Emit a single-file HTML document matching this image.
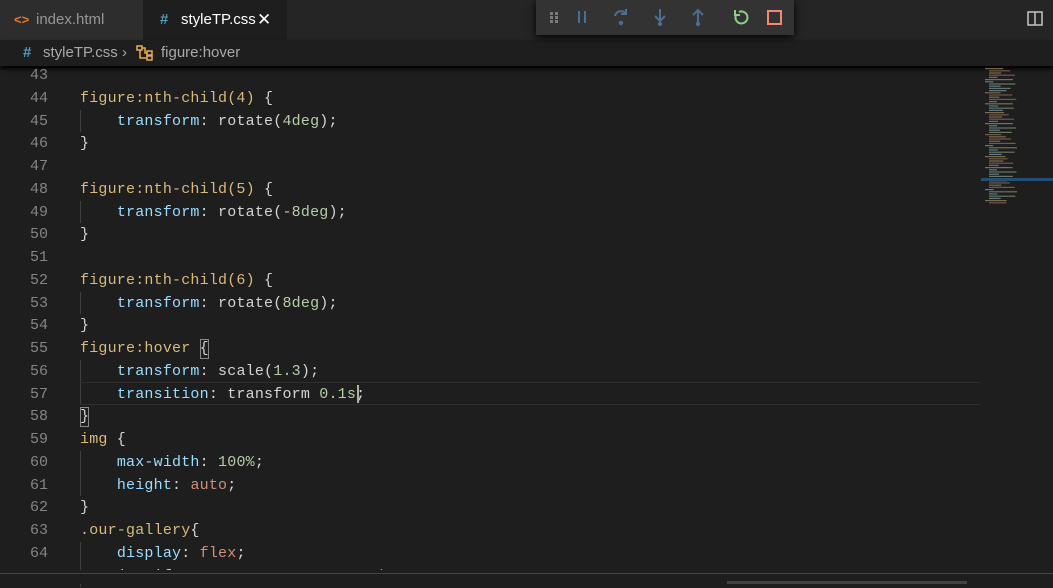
<!DOCTYPE html>
<html><head><meta charset="utf-8"><style>
*{margin:0;padding:0;box-sizing:border-box}
body{width:1053px;height:584px;background:#1e1e1e;overflow:hidden;position:relative;font-family:"Liberation Sans",sans-serif}
.tabs{position:absolute;left:0;top:0;width:1053px;height:40px;background:#252526}
.tab{position:absolute;top:0;height:40px;font-size:15px;line-height:40px}
.t1{left:0;width:143px;background:#2d2d2d;color:#969696}
.t2{left:143px;width:144px;background:#1e1e1e;color:#fff}
.bc{position:absolute;left:0;top:40px;width:1053px;height:26px;background:#1e1e1e;color:#a9a9a9;font-size:15px;line-height:26px;box-shadow:0 3px 4px #000}
.code{position:absolute;left:0;top:64px;font-family:"Liberation Mono",monospace;font-size:15px}
.ln{position:absolute;left:0;width:48px;text-align:right;color:#858585;height:23px;line-height:23px}
.cl{position:absolute;left:80px;white-space:pre;color:#d4d4d4;height:23px;line-height:23px;letter-spacing:0.2px}
.s{color:#d7ba7d}.p{color:#9cdcfe}.n{color:#b5cea8}.v{color:#ce9178}
.guide{position:absolute;left:80px;width:1px;background:#404040}
.dbg{position:absolute;left:536px;top:0;width:258px;height:35px;background:#333;box-shadow:0 2px 8px #000}
</style></head><body>
<div class="tabs">
<div class="tab t1"><span style="position:absolute;left:14px;color:#e37933;font-size:13px;font-weight:bold">&lt;&gt;</span><span style="position:absolute;left:36px">index.html</span></div>
<div class="tab t2"><span style="position:absolute;left:17px;color:#519aba;font-weight:bold">#</span><span style="position:absolute;left:38px">styleTP.css</span><span style="position:absolute;left:114px;font-size:17px">✕</span></div>
<svg style="position:absolute;left:1027px;top:11px" width="17" height="16"><rect x="1" y="1" width="14" height="13" fill="none" stroke="#c5c5c5" stroke-width="1.5"/><line x1="8" y1="1" x2="8" y2="14" stroke="#c5c5c5" stroke-width="1.5"/></svg>
</div>
<div class="bc"><span style="position:absolute;left:23px;color:#519aba;font-weight:bold">#</span><span style="position:absolute;left:43px">styleTP.css</span><span style="position:absolute;left:122px">›</span>
<svg style="position:absolute;left:136px;top:5px" width="18" height="16"><g fill="none" stroke="#e8ab53" stroke-width="1.5"><rect x="1" y="1" width="5" height="4"/><rect x="11" y="6" width="5" height="4"/><rect x="11" y="11" width="5" height="4"/><path d="M4 5v8h7M6 3h3v5h2"/></g></svg>
<span style="position:absolute;left:161px">figure:hover</span></div>
<div class="dbg">
<svg width="258" height="35" style="position:absolute;left:0;top:0">
<g fill="#7a7a7a"><rect x="14" y="12" width="3" height="3"/><rect x="19" y="12" width="3" height="3"/><rect x="14" y="16" width="3" height="3"/><rect x="19" y="16" width="3" height="3"/><rect x="14" y="20" width="3" height="3"/><rect x="19" y="20" width="3" height="3"/></g>
<g stroke="#4b6f93" stroke-width="2" fill="none"><line x1="43" y1="11" x2="43" y2="23"/><line x1="49" y1="11" x2="49" y2="23"/>
<path d="M79 16a6 6 0 0 1 11-2M90 9v5h-5"/>
<path d="M124 9v12M119 16l5 5 5-5"/><path d="M162 22v-12M157 15l5-5 5 5"/></g>
<g fill="#4b6f93"><circle cx="85" cy="23" r="2.2"/><circle cx="124" cy="24" r="2.2"/><circle cx="162" cy="24" r="2.2"/></g>
<path d="M203 12a6 6 0 1 1-3 3M199 10v5h5" stroke="#89d185" stroke-width="2" fill="none"/>
<rect x="232" y="11" width="13" height="13" stroke="#f48771" stroke-width="2" fill="none"/>
</svg></div>
<div class="code" id="c"></div>
<div style="position:absolute;left:80px;top:382px;width:900px;height:23px;border-top:1px solid #2e2e2e;border-bottom:1px solid #2e2e2e"></div>
<div style="position:absolute;left:200px;top:339px;width:9px;height:20px;border:1px solid #888"></div>
<div style="position:absolute;left:80px;top:407px;width:9px;height:20px;border:1px solid #888"></div>
<div style="position:absolute;left:357px;top:385px;width:2px;height:18px;background:#aeafad"></div>
<svg style="position:absolute;left:985px;top:68px" width="60" height="150" id="mm"></svg>
<div style="position:absolute;left:981px;top:178px;width:72px;height:3px;background:#264f78"></div>
<div style="position:absolute;left:0;top:570px;width:1053px;height:14px;background:#1e1e1e"></div>
<div style="position:absolute;left:0;top:573px;width:1053px;height:1px;background:#444"></div>
<div style="position:absolute;left:727px;top:581px;width:240px;height:3px;background:#424242"></div>
<script>
var L=[[43,''],[44,'<span class="s">figure:nth-child(4)</span> {'],[45,'    <span class="p">transform</span>: rotate(<span class="n">4deg</span>);'],[46,'}'],[47,''],
[48,'<span class="s">figure:nth-child(5)</span> {'],[49,'    <span class="p">transform</span>: rotate(<span class="n">-8deg</span>);'],[50,'}'],[51,''],
[52,'<span class="s">figure:nth-child(6)</span> {'],[53,'    <span class="p">transform</span>: rotate(<span class="n">8deg</span>);'],[54,'}'],
[55,'<span class="s">figure:hover</span> {'],[56,'    <span class="p">transform</span>: scale(<span class="n">1.3</span>);'],[57,'    <span class="p">transition</span>: transform <span class="n">0.1s</span>;'],[58,'}'],
[59,'<span class="s">img</span> {'],[60,'    <span class="p">max-width</span>: <span class="n">100%</span>;'],[61,'    <span class="p">height</span>: <span class="v">auto</span>;'],[62,'}'],
[63,'<span class="s">.our-gallery</span>{'],[64,'    <span class="p">display</span>: <span class="v">flex</span>;'],[65,'    <span class="p">justify-content</span>: <span class="v">space-around</span>;']];
var h='';L.forEach(function(l,i){var t=i*22.75;h+='<div class="ln" style="top:'+t+'px">'+l[0]+'</div><div class="cl" style="top:'+t+'px">'+l[1]+'</div>';});
[[45,1],[49,1],[53,1],[56,2],[60,2],[64,2]].forEach(function(g){h+='<div class="guide" style="top:'+((g[0]-43)*22.75)+'px;height:'+(g[1]*22.75)+'px"></div>';});
document.getElementById('c').innerHTML=h;
var m='',cols=['#d7ba7d','#9cdcfe','#ce9178','#b5cea8'];
for(var y=0;y<135;y+=2.2){var r=Math.sin(y*7)*0.5+0.5;var ind=(Math.floor(y/2.2)%5==0)?0:4;m+='<rect x="'+ind+'" y="'+y+'" width="'+(8+r*20)+'" height="1.2" fill="'+cols[Math.floor(y)%4]+'" opacity="0.5"/>';}
document.getElementById('mm').innerHTML=m;
</script>
</body></html>
